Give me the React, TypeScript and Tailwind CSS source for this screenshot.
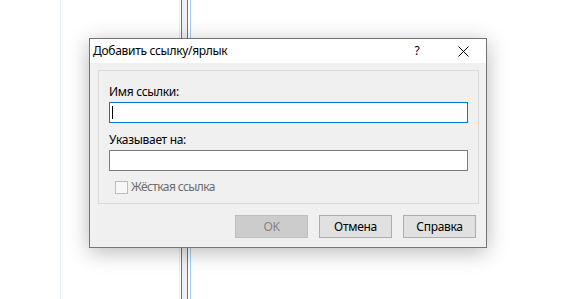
import React from "react";

const font = { fontFamily: '"Noto Sans", Roboto, sans-serif' };

function Button({ label, disabled }: { label: string; disabled?: boolean }) {
  return (
    <div
      className={
        "w-[73px] h-[23px] flex items-center justify-center text-[12px] leading-[16px] tracking-[-0.3px] border " +
        (disabled
          ? "bg-[#cccccc] border-[#bfbfbf] text-[#838383]"
          : "bg-[#e1e1e1] border-[#adadad] text-black")
      }
    >
      {label}
    </div>
  );
}

export default function App() {
  return (
    <div className="relative w-[586px] h-[299px] bg-white overflow-hidden" style={font}>
      {/* background: vertical lines of the window behind */}
      <div className="flex h-full">
        <div className="w-[60px] shrink-0" />
        <div className="w-px shrink-0 bg-[#e4edf7]" />
        <div className="w-[118px] shrink-0" />
        <div className="w-px shrink-0 bg-[#e6eef8]" />
        <div className="w-px shrink-0" />
        <div className="w-px shrink-0 bg-[#737373]" />
        <div className="w-[5px] shrink-0 bg-[#f0f0f0]" />
        <div className="w-px shrink-0 bg-[#737373]" />
        <div className="w-[2px] shrink-0" />
        <div className="w-px shrink-0 bg-[#a6cdf6]" />
      </div>

      {/* dialog window */}
      <div className="absolute left-[89px] top-[38px] w-[398px] h-[210px] border border-[#747474] bg-[#f0f0f0] flex flex-col shadow-[0_4px_20px_rgba(0,0,0,0.28)]">
        {/* title bar */}
        <div className="h-[24px] bg-white flex items-center shrink-0">
          <div className="pl-[3px] text-[12px] leading-[16px] tracking-[-0.3px] text-black flex-1">
            Добавить ссылку/ярлык
          </div>
          <div className="w-[46px] h-full flex items-center justify-center text-[12px] leading-[16px] text-black">
            ?
          </div>
          <div className="w-[46px] h-full flex items-center justify-center">
            <svg width="11" height="11" viewBox="0 0 11 11">
              <path d="M0.5 0.5 L10.5 10.5 M10.5 0.5 L0.5 10.5" stroke="#000" strokeWidth="1" />
            </svg>
          </div>
        </div>

        {/* body */}
        <div className="flex-1 flex flex-col pt-[7px] pl-[8px] pr-[7px]">
          <div className="h-[134px] border border-[#dcdcdc] flex flex-col pt-[13px] px-[10px]">
            <div className="text-[12px] leading-[16px] tracking-[-0.3px] text-black">Имя ссылки:</div>
            <div className="mt-[2px] h-[21px] border border-[#0078d7] bg-white flex items-center pl-[2px]">
              <div className="w-px h-[13px] bg-black" />
            </div>
            <div className="mt-[9px] text-[12px] leading-[16px] tracking-[-0.3px] text-black">Указывает на:</div>
            <div className="mt-[2px] h-[21px] border border-[#7a7a7a] bg-white" />
            <div className="mt-[8px] flex items-center pl-[6px]">
              <div className="w-[13px] h-[13px] border border-[#bcbcbc] bg-[#f7f7f7]" />
              <div className="ml-[3px] text-[12px] leading-[16px] tracking-[-0.6px] text-[#6d6d6d]">Жёсткая ссылка</div>
            </div>
          </div>
          <div className="mt-[11px] flex justify-end gap-[11px] pr-[3px]">
            <Button label="OK" disabled />
            <Button label="Отмена" />
            <Button label="Справка" />
          </div>
        </div>
      </div>
    </div>
  );
}
